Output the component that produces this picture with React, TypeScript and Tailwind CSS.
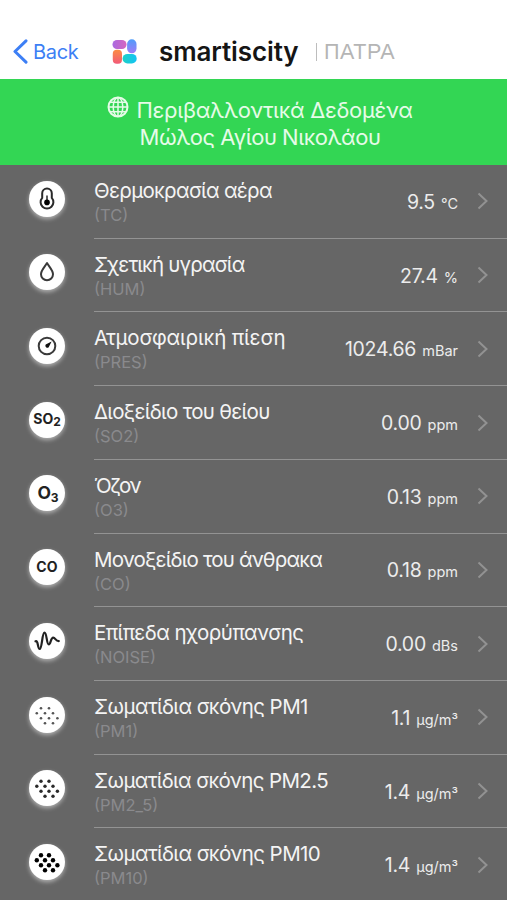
import React from 'react';

type IconName = 'thermometer' | 'drop' | 'gauge' | 'so2' | 'o3' | 'co' | 'noise' | 'pm1' | 'pm25' | 'pm10';

interface Reading {
  icon: IconName;
  title: string;
  titleClass: string;
  code: string;
  value: string;
  unit: string;
}

const readings: Reading[] = [
  { icon: 'thermometer', title: 'Θερμοκρασία αέρα', titleClass: 'tracking-[-0.7px]', code: 'TC', value: '9.5', unit: '°C' },
  { icon: 'drop', title: 'Σχετική υγρασία', titleClass: 'tracking-[-0.8px]', code: 'HUM', value: '27.4', unit: '%' },
  { icon: 'gauge', title: 'Ατμοσφαιρική πίεση', titleClass: 'tracking-[-0.12px]', code: 'PRES', value: '1024.66', unit: 'mBar' },
  { icon: 'so2', title: 'Διοξείδιο του θείου', titleClass: 'tracking-[-0.7px]', code: 'SO2', value: '0.00', unit: 'ppm' },
  { icon: 'o3', title: 'Όζον', titleClass: 'tracking-[-1.5px]', code: 'O3', value: '0.13', unit: 'ppm' },
  { icon: 'co', title: 'Μονοξείδιο του άνθρακα', titleClass: 'tracking-[-0.84px]', code: 'CO', value: '0.18', unit: 'ppm' },
  { icon: 'noise', title: 'Επίπεδα ηχορύπανσης', titleClass: 'tracking-[-0.56px]', code: 'NOISE', value: '0.00', unit: 'dBs' },
  { icon: 'pm1', title: 'Σωματίδια σκόνης PM1', titleClass: 'tracking-[-0.58px]', code: 'PM1', value: '1.1', unit: 'μg/m³' },
  { icon: 'pm25', title: 'Σωματίδια σκόνης PM2.5', titleClass: 'tracking-[-0.62px]', code: 'PM2_5', value: '1.4', unit: 'μg/m³' },
  { icon: 'pm10', title: 'Σωματίδια σκόνης PM10', titleClass: 'tracking-[-0.58px]', code: 'PM10', value: '1.4', unit: 'μg/m³' },
];

const dots = [
  [12, 11.2], [20, 11.2],
  [7.8, 16.2], [16, 16.2], [24, 16.2],
  [12, 21.2], [20, 21.2], [28.4, 21.2],
  [16, 26.2], [24, 26.2],
];

function Particles({ r, color }: { r: number; color: string }) {
  return (
    <svg viewBox="0 0 36 36" className="w-9 h-9" fill={color}>
      {dots.map(([cx, cy]) => (
        <circle key={`${cx}-${cy}`} cx={cx} cy={cy} r={r} />
      ))}
    </svg>
  );
}

function ReadingIcon({ name }: { name: IconName }) {
  switch (name) {
    case 'thermometer':
      return (
        <svg viewBox="0 0 36 36" className="w-9 h-9" fill="none" stroke="#2a2a2a" strokeWidth="2">
          <path d="M13.2 12.3a4.8 4.8 0 0 1 9.6 0v4.6a6.4 6.4 0 1 1-9.6 0z" />
          <path d="M18 14.5v6" strokeWidth="1.500" />
          <circle cx="18" cy="21.400" r="2.800" fill="#000" stroke="none" />
        </svg>
      );
    case 'drop':
      return (
        <svg viewBox="0 0 36 36" className="w-9 h-9" fill="none" stroke="#3a3a3a" strokeWidth="2" strokeLinejoin="round">
          <path d="M18 9c-2.300 4-6 7.400-6 11.200a6 6 0 0 0 12 0c0-3.800-3.700-7.200-6-11.200z" />
        </svg>
      );
    case 'gauge':
      return (
        <svg viewBox="0 0 36 36" className="w-9 h-9" fill="none" stroke="#3a3a3a" strokeWidth="2">
          <circle cx="18" cy="18" r="8.300" />
          <path d="M22.600 13.600l-2.900 5.600a2 2 0 0 1-3-2.600z" fill="#111" stroke="none" />
        </svg>
      );
    case 'so2':
      return (
        <span className="flex -translate-y-px items-baseline text-[14px] leading-none font-bold text-[#222]">
          SO<span className="translate-y-[2px] text-[12px]">2</span>
        </span>
      );
    case 'o3':
      return (
        <span className="flex translate-x-px -translate-y-px items-baseline text-[17.500px] leading-none font-bold text-[#222]">
          O<span className="translate-y-[3px] text-[12px]">3</span>
        </span>
      );
    case 'co':
      return <span className="text-[14px] leading-none font-bold tracking-[0.200px] text-[#222]">CO</span>;
    case 'noise':
      return (
        <svg viewBox="0 0 36 36" className="w-9 h-9" fill="none" stroke="#222" strokeWidth="2.200" strokeLinecap="round" strokeLinejoin="round">
          <path d="M6.500 18.300c1.500-.5 1.900 1.200 2.300 3.200.5 2.600.9 4.500 1.800 4.500 2.600 0 2.400-16.300 4.900-16.300 2.400 0 2 11.800 4.300 11.800 1.900 0 1.900-6.800 4.400-6.800 2.200 0 2.300 3.400 5.600 3.400" />
        </svg>
      );
    case 'pm1':
      return <Particles r={1.3} color="#555" />;
    case 'pm25':
      return <Particles r={1.7} color="#2a2a2a" />;
    case 'pm10':
      return <Particles r={2.2} color="#000" />;
  }
}

function ReadingRow({ reading }: { reading: Reading }) {
  return (
    <li className="flex h-[73.72px] pl-[29px]">
      <div className="mt-[15.500px] flex h-9 w-9 shrink-0 items-center justify-center rounded-full bg-white shadow-[0_2px_4px_rgba(255,255,255,0.5)]">
        <ReadingIcon name={reading.icon} />
      </div>
      <div className="ml-[29px] flex flex-1 justify-between border-b border-[#939393] pr-[19px]">
        <div className="pt-[13px]">
          <h3 className={`text-[20.500px] leading-[26px] whitespace-nowrap text-[#f4f4f4] ${reading.titleClass}`}>{reading.title}</h3>
          <p className="text-[16.500px] leading-[22px] text-[#8a8a8d]">({reading.code})</p>
        </div>
        <div className="flex items-center gap-[19px]">
          <div className="flex items-baseline gap-[6px] pt-[3px] whitespace-nowrap text-[#ececec]">
            <span className="text-[19.500px] leading-6 tracking-[-0.250px]">{reading.value}</span>
            <span className="text-[14.500px] leading-6">{reading.unit}</span>
          </div>
          <svg viewBox="0 0 11 18" className="w-[11px] h-[18px]" fill="none" stroke="#929292" strokeWidth="2">
            <path d="M1.500 1.500l8 7.500-8 7.500" />
          </svg>
        </div>
      </div>
    </li>
  );
}

function Logo() {
  return (
    <svg viewBox="0 0 26 26" className="w-[25px] h-[25px]">
      <defs>
        <linearGradient id="violet" x1="0" y1="0" x2="1" y2="0">
          <stop offset="0" stopColor="#a96ae0" />
          <stop offset="1" stopColor="#d665c0" />
        </linearGradient>
        <linearGradient id="blue" x1="0" y1="0" x2="0" y2="1">
          <stop offset="0" stopColor="#4f9dfa" />
          <stop offset="1" stopColor="#a17af8" />
        </linearGradient>
        <linearGradient id="orange" x1="0" y1="0" x2="0" y2="1">
          <stop offset="0" stopColor="#fb8c43" />
          <stop offset="1" stopColor="#f25a78" />
        </linearGradient>
        <linearGradient id="cyan" x1="0" y1="0" x2="1" y2="0">
          <stop offset="0" stopColor="#1fd0c5" />
          <stop offset="1" stopColor="#12c3f5" />
        </linearGradient>
      </defs>
      <rect x="0.500" y="1" width="14.600" height="9.400" rx="4.700" fill="url(#violet)" />
      <rect x="15.700" y="0.300" width="9.800" height="14.600" rx="4.900" fill="url(#blue)" />
      <rect x="0.800" y="11.300" width="9.600" height="14.400" rx="4.200" fill="url(#orange)" />
      <rect x="11" y="15.500" width="14.700" height="10" rx="5" fill="url(#cyan)" />
    </svg>
  );
}

export default function App() {
  return (
    <div className="flex h-[900px] w-[507px] flex-col overflow-hidden bg-[#666666] font-['Inter','Liberation_Sans',sans-serif]">
      <header className="flex h-[79px] shrink-0 items-center bg-white pt-[24px] pl-[13px]">
        <button className="flex w-[99px] items-center gap-[5px] text-[#3d7ff5]">
          <svg viewBox="0 0 15 25" className="w-[15px] h-[25px]" fill="none" stroke="currentColor" strokeWidth="3" strokeLinecap="round" strokeLinejoin="round">
            <path d="M13 1.800L2 12.500l11 10.700" />
          </svg>
          <span className="text-[20px] leading-6 tracking-[-0.300px]">Back</span>
        </button>
        <Logo />
        <span className="ml-[22px] text-[26px] leading-8 font-semibold tracking-[-0.100px] text-[#151515]">smartiscity</span>
        <span className="ml-[17px] h-[18px] w-[1.500px] bg-[#bdbdbd]" />
        <span className="ml-[7px] font-['Liberation_Sans',sans-serif] text-[21.500px] leading-8 tracking-[0.500px] text-[#b5b5b5]">ΠΑΤΡΑ</span>
      </header>

      <div className="flex h-[86px] shrink-0 flex-col items-center bg-[#33d654] pt-[18px] pl-[13px] text-[22px] leading-[27px] text-[#e6fbe8]">
        <div className="flex gap-[7px] whitespace-nowrap">
          <svg viewBox="0 0 22 22" className="-mt-px w-[22px] h-[22px]" fill="none" stroke="currentColor" strokeWidth="1.500">
            <circle cx="11" cy="11" r="9.500" strokeWidth="2" />
            <ellipse cx="11" cy="11" rx="4.800" ry="9.500" />
            <path d="M11 1.500v19M1.500 11h19M3 6.200h16M3 15.800h16" />
          </svg>
          <span className="tracking-[-0.300px]">Περιβαλλοντικά Δεδομένα</span>
        </div>
        <div className="tracking-[-0.500px]">Μώλος Αγίου Νικολάου</div>
      </div>

      <ul className="flex flex-col">
        {readings.map((reading) => (
          <ReadingRow key={reading.code} reading={reading} />
        ))}
      </ul>
    </div>
  );
}
